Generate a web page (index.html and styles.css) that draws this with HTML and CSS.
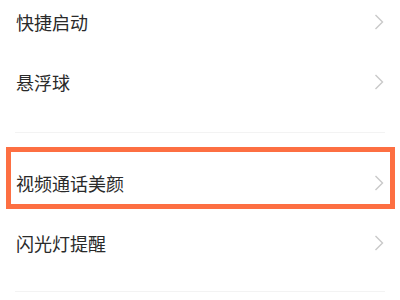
FILE: index.html
```html
<!DOCTYPE html>
<html lang="zh-CN">
	<head>
		<meta charset="UTF-8" />
		<meta
			name="viewport"
			content="width=device-width, initial-scale=1.0" />
		<title>设置</title>

		<link rel="stylesheet" href="styles.css">
	</head>
	<body>
		<div class="settings">
			<div class="group group--first">
				<div class="row">
					<span class="row__label">快捷启动</span>
					<svg class="row__arrow" width="10" height="16" viewBox="0 0 10 16"><polyline points="1.5,1 8.5,8 1.5,15" /></svg>
				</div>
				<div class="row">
					<span class="row__label">悬浮球</span>
					<svg class="row__arrow" width="10" height="16" viewBox="0 0 10 16"><polyline points="1.5,1 8.5,8 1.5,15" /></svg>
				</div>
			</div>
			<div class="divider"></div>

			<div class="group">
				<div class="row row--marked">
					<span class="row__label">视频通话美颜</span>
					<svg class="row__arrow" width="10" height="16" viewBox="0 0 10 16"><polyline points="1.5,1 8.5,8 1.5,15" /></svg>
					<div class="highlight"></div>
				</div>
				<div class="row">
					<span class="row__label">闪光灯提醒</span>
					<svg class="row__arrow" width="10" height="16" viewBox="0 0 10 16"><polyline points="1.5,1 8.5,8 1.5,15" /></svg>
				</div>
			</div>
			<div class="divider"></div>
		</div>
	</body>
</html>
```

FILE: styles.css
```css
body {
	margin: 0;
	background-color: #fff;
	font-family: 'Noto Sans CJK SC', 'Noto Sans', sans-serif;
	overflow: hidden;
}
.settings {
	display: flex;
	flex-direction: column;
}
.group {
	padding-bottom: 18px;
}
.group--first {
	margin-top: -8px;
	padding-bottom: 20px;
}
.row {
	height: 60px;
	display: flex;
	align-items: center;
	justify-content: space-between;
	padding: 0 16px 0 16px;
}
.row__label {
	font-size: 18px;
	color: #2a2a2a;
	line-height: 1;
}
.row__arrow {
	fill: none;
	stroke: #c9c9c9;
	stroke-width: 1.4;
}
.divider {
	height: 1px;
	margin: 0 15px 20px;
	background-color: #f3f3f3;
}

/* annotation box */

.row--marked {
	position: relative;
}
.highlight {
	position: absolute;
	left: 6px;
	top: -6px;
	width: 389px;
	height: 62px;
	box-sizing: border-box;
	border: 5px solid #fd6f42;
}
```
